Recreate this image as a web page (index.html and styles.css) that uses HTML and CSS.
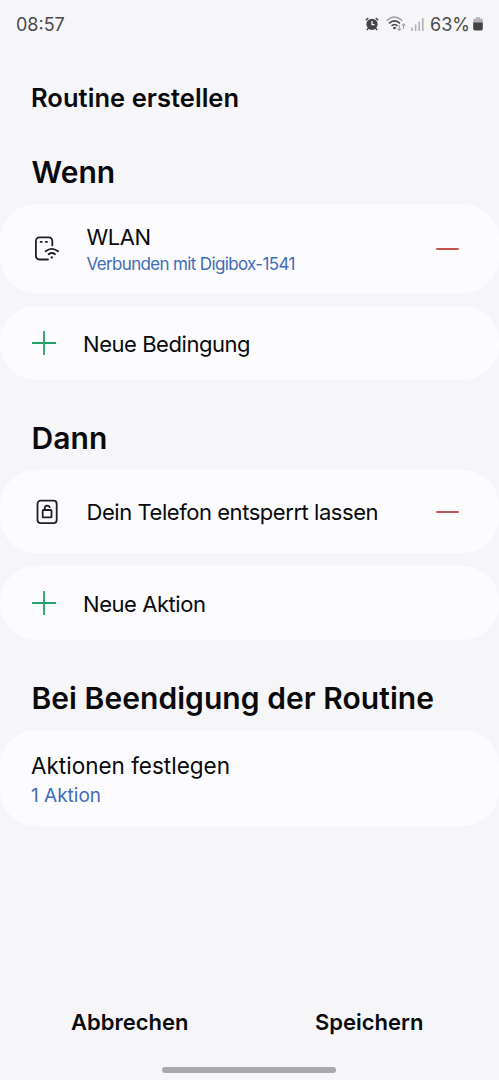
FILE: index.html
```html
<!DOCTYPE html>
<html lang="de">
  <head>
    <meta charset="UTF-8" />
    <title>Routine erstellen</title>
    <link rel="stylesheet" href="styles.css">
  </head>
  <body>
    <div class="status-bar">
      <span class="clock">08:57</span>
      <div class="status-icons">
        <svg class="alarm" width="14" height="14" viewBox="0 0 14 14">
          <circle cx="7" cy="7.3" r="5.6" fill="#444447" />
          <path d="M.8 3.2 3.3 1M13.2 3.2 10.7 1M3.2 11.4 2 13M10.8 11.4 12 13" fill="none" stroke="#444447" stroke-width="1.5" />
          <path d="M7 4v3.6h2.6" fill="none" stroke="#f6f6f8" stroke-width="1.3" />
        </svg>
        <svg class="wifi" width="20" height="16" viewBox="0 0 20 16">
          <path d="M.6 4.8q7.9-7.4 15.8 0" fill="none" stroke="#a5a5a8" stroke-width="1.5" />
          <path d="M3 7.3q5.5-4.7 11 0M5.5 9.8q3-2.6 6 0" fill="none" stroke="#444447" stroke-width="1.6" />
          <circle cx="8.5" cy="12" r="1.3" fill="#444447" />
          <path d="M13.3 9v5.3M11.6 12.6l1.7 1.8 1.7-1.8M17.6 13V8M15.9 9.7l1.7-1.8 1.7 1.8" fill="none" stroke="#a5a5a8" stroke-width="1.1" />
        </svg>
        <svg class="signal" width="13" height="14" viewBox="0 0 13 14">
          <path d="M1 10.5V14M4.6 7.5V14M8.2 4.5V14M11.8 1V14" stroke="#b2b2b5" stroke-width="1.6" />
        </svg>
        <span class="percent">63%</span>
        <svg class="battery" width="10" height="14" viewBox="0 0 10 14">
          <path d="M3 .3h4v1.2h1.2A1.6 1.6 0 0 1 9.8 3v3H.2V3a1.6 1.6 0 0 1 1.6-1.5H3z" fill="#b2b2b5" />
          <path d="M.2 5.6h9.6v6.2a1.7 1.7 0 0 1-1.7 1.7H1.9a1.7 1.7 0 0 1-1.7-1.7z" fill="#444447" />
        </svg>
      </div>
    </div>

    <h1>Routine erstellen</h1>

    <h2>Wenn</h2>
    <div class="card card-wlan">
      <svg class="icon" width="28" height="28" viewBox="0 0 28 28">
        <path d="M20.3 10.4V5.8a3.5 3.5 0 0 0-3.5-3.5H7.4a3.5 3.5 0 0 0-3.5 3.5V21a3.5 3.5 0 0 0 3.5 3.5h8.6" />
        <path d="M8.6 6.9h1.2M13.8 6.9h1.2" />
        <path d="M13.6 16.2q6.2-4.8 12.4 0M16.6 19.2q3.2-2.5 6.4 0" />
        <circle class="dot" cx="19.8" cy="22.4" r="1.2" />
      </svg>
      <div class="labels">
        <div class="label">WLAN</div>
        <div class="sub">Verbunden mit Digibox-1541</div>
      </div>
      <button class="remove" aria-label="Entfernen"></button>
    </div>
    <div class="card card-add">
      <svg class="plus" width="24" height="24" viewBox="0 0 24 24"><path d="M12 .7v22.6M.7 12h22.6" /></svg>
      <div class="label">Neue Bedingung</div>
    </div>

    <h2>Dann</h2>
    <div class="card card-unlock">
      <svg class="icon" width="28" height="28" viewBox="0 0 28 28">
        <rect x="5.5" y="2.7" width="19.2" height="22.5" rx="3.2" />
        <rect x="10.7" y="12" width="8.8" height="7.4" rx=".7" />
        <path d="M12.7 12v-1.6q0-2.7 2.5-2.8 2 0 2.5 1.5" />
      </svg>
      <div class="label">Dein Telefon entsperrt lassen</div>
      <button class="remove" aria-label="Entfernen"></button>
    </div>
    <div class="card card-add">
      <svg class="plus" width="24" height="24" viewBox="0 0 24 24"><path d="M12 .7v22.6M.7 12h22.6" /></svg>
      <div class="label">Neue Aktion</div>
    </div>

    <h2>Bei Beendigung der Routine</h2>
    <div class="card card-end">
      <div class="labels">
        <div class="label">Aktionen festlegen</div>
        <div class="sub">1 Aktion</div>
      </div>
    </div>

    <div class="actions">
      <button class="btn">Abbrechen</button>
      <button class="btn">Speichern</button>
    </div>
    <div class="nav-handle"></div>
  </body>
</html>
```

FILE: styles.css
```css
* {
  box-sizing: border-box;
}
body {
  font-family: Inter, Roboto, sans-serif;
  display: flex;
  flex-direction: column;
  height: 1080px;
  background: #f6f6f8;
  color: #0a0a0c;
  margin: 0;
  overflow: hidden;
  white-space: nowrap;
}
.status-bar {
  display: flex;
  justify-content: space-between;
  align-items: center;
  height: 48px;
  padding: 0 16px;
  font-size: 18px;
  color: #4b4b4e;
}
.status-icons {
  display: flex;
  align-items: center;
}
.wifi {
  margin-left: 7px;
}
.signal {
  margin-left: 5px;
}
.percent {
  margin: 0 3px 0 6px;
}
h1 {
  font-size: 25.5px;
  font-weight: 600;
  line-height: 32px;
  letter-spacing: 0.05px;
  margin: 34px 0 0 31px;
}
h2 {
  font-size: 30px;
  font-weight: 600;
  line-height: 40px;
  letter-spacing: 0.05px;
  margin: 38px 0 12px 31.5px;
}
.card {
  display: flex;
  align-items: center;
  background: #fcfcfe;
  border-radius: 36px;
  padding: 0 40px 0 32px;
}
.card-wlan {
  height: 89px;
}
.card-add {
  height: 74px;
  margin-top: 13px;
}
.card-unlock {
  height: 83px;
}
.card-end {
  height: 96px;
  padding-left: 31px;
}
.icon {
  fill: none;
  stroke: #202023;
  stroke-width: 1.8;
  stroke-linecap: round;
  margin-right: 26.5px;
}
.icon .dot {
  fill: #202023;
  stroke: none;
}
.labels {
  padding-top: 2px;
}
.plus {
  fill: none;
  stroke: #22a067;
  stroke-width: 1.8;
  stroke-linecap: round;
  margin-right: 27px;
}
.label {
  font-size: 22px;
  line-height: 28px;
  letter-spacing: -0.45px;
}
.card-add .label {
  padding-top: 1px;
}
.sub {
  font-size: 17px;
  line-height: 26px;
  letter-spacing: -0.65px;
  color: #426bb8;
}
.card-end .labels {
  padding-top: 6px;
}
.card-end .label {
  font-size: 22.5px;
  letter-spacing: 0;
}
.card-end .sub {
  font-size: 19px;
  line-height: 31px;
  letter-spacing: 0;
}
.remove {
  width: 23px;
  height: 2px;
  border: none;
  border-radius: 1px;
  padding: 0;
  margin-left: auto;
  background: #c25351;
}
.actions {
  display: flex;
  margin-top: auto;
  padding: 0 10px;
}
.btn {
  flex: 1;
  font-family: inherit;
  font-size: 22px;
  font-weight: 600;
  line-height: 32px;
  color: #0a0a0c;
  background: none;
  border: none;
  padding: 0;
}
.nav-handle {
  width: 174px;
  height: 6px;
  border-radius: 3px;
  background: #a9a9ab;
  margin: 29px auto 7px 162px;
}
```
